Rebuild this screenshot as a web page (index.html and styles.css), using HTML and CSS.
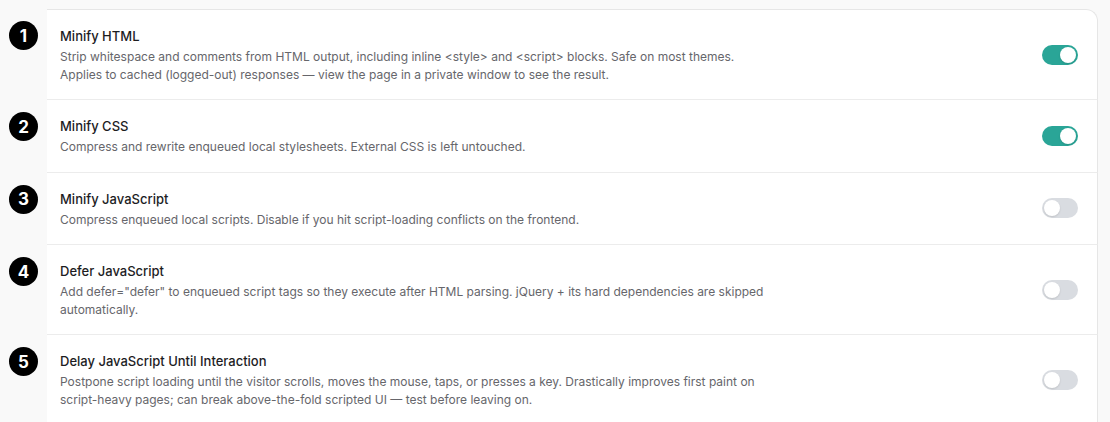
FILE: index.html
```html
<!DOCTYPE html>
<html lang="en">
<head>
    <meta charset="UTF-8">
    <meta name="viewport" content="width=device-width, initial-scale=1.0">
    <title>Optimization settings</title>
    <link rel="stylesheet" href="styles.css">
</head>
<body>
    <ol class="steps">
        <li class="step">
            <div class="num"><span class="badge">1</span></div>
            <div class="row first">
                <div class="text">
                    <h3>Minify HTML</h3>
                    <p>Strip whitespace and comments from HTML output, including inline &lt;style&gt; and &lt;script&gt; blocks. Safe on most themes. Applies to cached (logged-out) responses — view the page in a private window to see the result.</p>
                </div>
                <label class="switch on"><span class="knob"></span></label>
            </div>
        </li>
        <li class="step">
            <div class="num"><span class="badge">2</span></div>
            <div class="row">
                <div class="text">
                    <h3>Minify CSS</h3>
                    <p>Compress and rewrite enqueued local stylesheets. External CSS is left untouched.</p>
                </div>
                <label class="switch on"><span class="knob"></span></label>
            </div>
        </li>
        <li class="step">
            <div class="num"><span class="badge">3</span></div>
            <div class="row">
                <div class="text">
                    <h3>Minify JavaScript</h3>
                    <p>Compress enqueued local scripts. Disable if you hit script-loading conflicts on the frontend.</p>
                </div>
                <label class="switch"><span class="knob"></span></label>
            </div>
        </li>
        <li class="step">
            <div class="num"><span class="badge">4</span></div>
            <div class="row">
                <div class="text">
                    <h3>Defer JavaScript</h3>
                    <p>Add defer="defer" to enqueued script tags so they execute after HTML parsing. jQuery + its hard dependencies are skipped automatically.</p>
                </div>
                <label class="switch"><span class="knob"></span></label>
            </div>
        </li>
        <li class="step">
            <div class="num"><span class="badge">5</span></div>
            <div class="row">
                <div class="text">
                    <h3>Delay JavaScript Until Interaction</h3>
                    <p>Postpone script loading until the visitor scrolls, moves the mouse, taps, or presses a key. Drastically improves first paint on script-heavy pages; can break above-the-fold scripted UI — test before leaving on.</p>
                </div>
                <label class="switch"><span class="knob"></span></label>
            </div>
        </li>
    </ol>
</body>
</html>
```

FILE: styles.css
```css
* {
    margin: 0;
    padding: 0;
    box-sizing: border-box;
}
body {
    background: #f9f9f9;
    font-family: Inter, "Noto Sans", sans-serif;
    color: #1d1d1f;
    padding: 9px 12px 0 0;
}
.steps {
    list-style: none;
}
.step {
    display: flex;
    align-items: flex-start;
}
.num {
    flex: 0 0 47px;
    padding: 12px 0 0 9px;
}
.badge {
    width: 29px;
    height: 29px;
    border-radius: 50%;
    background: #000;
    color: #fff;
    font-size: 17px;
    font-weight: 700;
    display: flex;
    align-items: center;
    justify-content: center;
}
.row {
    flex: 1;
    display: flex;
    align-items: center;
    justify-content: space-between;
    background: #fff;
    border-right: 1px solid #e6e6e6;
    border-bottom: 1px solid #ececec;
    padding: 16px 19px 16px 13px;
}
.row.first {
    border-top: 1px solid #e6e6e6;
    border-top-right-radius: 12px;
}
.text {
    max-width: 712px;
}
.text h3 {
    font-size: 13px;
    font-weight: 500;
    line-height: 20px;
    color: #1d1d1f;
}
.text p {
    margin-top: 2px;
    font-size: 12px;
    line-height: 17.5px;
    color: #66666b;
}
.switch {
    flex: 0 0 36px;
    height: 20px;
    border-radius: 10px;
    background: #d9dce1;
    display: flex;
    align-items: center;
    padding: 2px;
}
.switch.on {
    background: #2aa597;
    justify-content: flex-end;
}
.knob {
    width: 16px;
    height: 16px;
    border-radius: 50%;
    background: #fff;
    box-shadow: 0 1px 2px rgba(0, 0, 0, 0.12);
}
```
